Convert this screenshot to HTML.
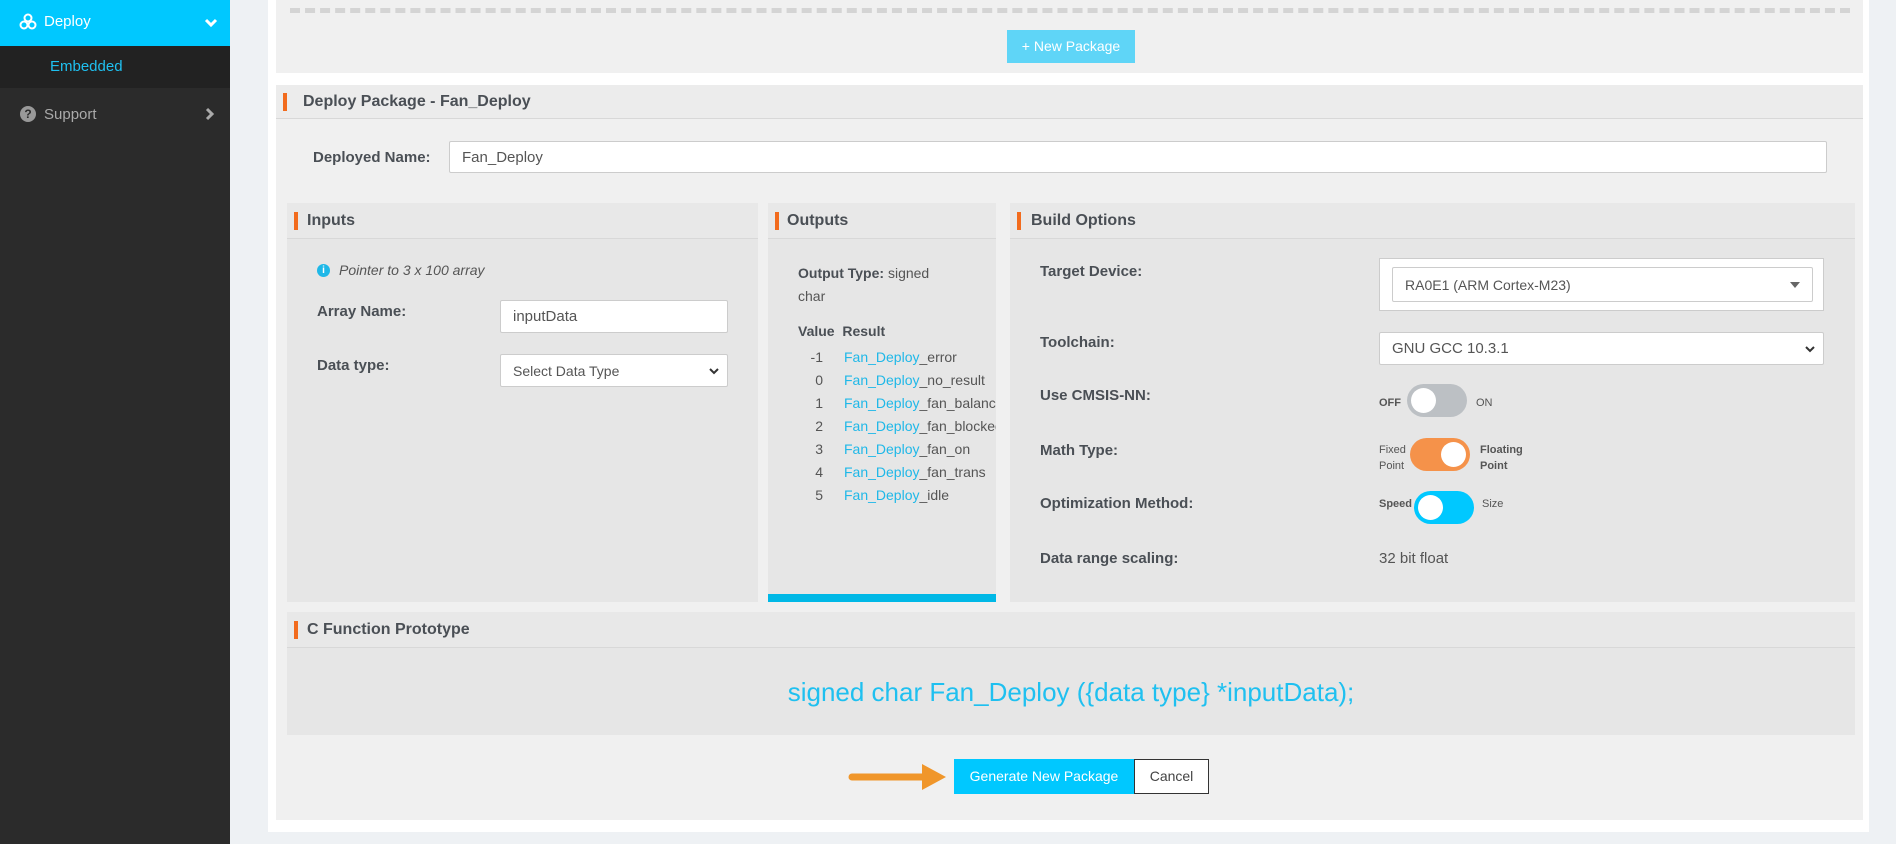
<!DOCTYPE html>
<html><head><meta charset="utf-8"><style>
*{box-sizing:border-box;margin:0;padding:0}
body{width:1896px;height:844px;overflow:hidden;background:#eef1f4;font-family:"Liberation Sans",Arial,sans-serif;color:#444;font-size:15px;position:relative}
.abs{position:absolute}
.sb{left:0;top:0;width:230px;height:844px;background:#2b2b2b}
.b{font-weight:bold;color:#4a4f55}
.hdr{position:absolute;left:0;right:0;top:0;background:#e8e8e8;border-bottom:1px solid #d8d8d8;font-weight:bold;color:#4a4f55;font-size:16px}
.hdr:before{content:"";position:absolute;left:7px;width:4px;background:#f26b1d;top:50%;height:18px;margin-top:-9px}
.panel{position:absolute;background:#e6e6e6}
.inp{position:absolute;background:#fff;border:1px solid #ccc;border-radius:2px;font-size:15px;color:#555;padding-left:12px;display:flex;align-items:center}
.link{color:#1fb8e8}
.tg{position:absolute;width:60px;height:33px;border-radius:17px}
.tg i{position:absolute;top:4px;width:25px;height:25px;border-radius:50%;background:#fff}
.sm{position:absolute;font-size:11px;color:#555}
</style></head><body>
<div class="abs sb"></div>
<div class="abs" style="left:0;top:0;width:230px;height:46px;background:#00c8ff;color:#fff;font-size:15px">
<svg class="abs" style="left:19px;top:13px" width="18" height="18" viewBox="0 0 18 18"><circle cx="9" cy="5" r="3.5" fill="none" stroke="#fff" stroke-width="2"/><circle cx="5" cy="12" r="3.5" fill="none" stroke="#fff" stroke-width="2"/><circle cx="13" cy="12" r="3.5" fill="none" stroke="#fff" stroke-width="2"/></svg>
<span class="abs" style="left:44px;top:13px">Deploy</span>
<svg class="abs" style="left:204px;top:17px" width="14" height="12" viewBox="0 0 14 12"><path d="M2 3 L7 8 L12 3" stroke="#fff" stroke-width="3" fill="none"/></svg>
</div>
<div class="abs" style="left:0;top:46px;width:230px;height:42px;background:#222"><span class="abs" style="left:50px;top:12px;color:#1fc0f0">Embedded</span></div>
<div class="abs" style="left:20px;top:106px;width:16px;height:16px;border-radius:50%;background:#999;color:#2b2b2b;font-size:12px;font-weight:bold;text-align:center;line-height:16px">?</div>
<span class="abs" style="left:44px;top:106px;color:#aaa">Support</span>
<svg class="abs" style="left:204px;top:107px" width="12" height="14" viewBox="0 0 12 14"><path d="M3 2 L8 7 L3 12" stroke="#aaa" stroke-width="3" fill="none"/></svg>

<div class="abs" style="left:268px;top:0;width:1601px;height:832px;background:#fff"></div>
<div class="abs" style="left:276px;top:0;width:1587px;height:73px;background:#f0f0f0"></div>
<div class="abs" style="left:290px;top:8px;width:1560px;height:5px;border-top:5px dashed #d4d4d4"></div>
<div class="abs" style="left:1007px;top:30px;width:128px;height:33px;background:#5fd5f7;color:#fff;font-size:14px;text-align:center;line-height:33px">+ New Package</div>

<div class="abs" style="left:276px;top:85px;width:1587px;height:735px;background:#f0f0f0"></div>
<div class="hdr" style="left:276px;width:1587px;top:85px;height:34px;line-height:34px;padding-left:27px;background:#ececec">Deploy Package - Fan_Deploy</div>
<span class="abs b" style="left:313px;top:149px">Deployed Name:</span>
<div class="inp" style="left:449px;top:141px;width:1378px;height:32px">Fan_Deploy</div>

<div class="panel" style="left:287px;top:203px;width:471px;height:399px">
<div class="hdr" style="height:36px;line-height:36px;padding-left:20px">Inputs</div>
<div class="abs" style="left:30px;top:61px;width:13px;height:13px;border-radius:50%;background:#1fb8e8;color:#fff;font-size:10px;font-weight:bold;text-align:center;line-height:13px">i</div>
<span class="abs" style="left:52px;top:59px;font-style:italic;font-size:14px;color:#555">Pointer to 3 x 100 array</span>
<span class="abs b" style="left:30px;top:100px">Array Name:</span>
<div class="inp" style="left:213px;top:97px;width:228px;height:33px">inputData</div>
<span class="abs b" style="left:30px;top:154px">Data type:</span>
<div class="inp" style="left:213px;top:151px;width:228px;height:33px;font-size:14px">Select Data Type<svg class="abs" style="right:8px;top:12px" width="10" height="8" viewBox="0 0 10 8"><path d="M1 2 L5 6 L9 2" stroke="#333" stroke-width="2" fill="none"/></svg></div>
</div>

<div class="panel" style="left:768px;top:203px;width:228px;height:399px;overflow:hidden">
<div class="hdr" style="height:36px;line-height:36px;padding-left:19px">Outputs</div>
<div class="abs" style="left:30px;top:59px;line-height:23px;color:#555;font-size:14px"><b style="color:#4a4f55">Output Type:</b> signed<br>char</div>
<div class="abs b" style="left:30px;top:120px;font-size:14px">Value&nbsp; Result</div>
<div class="abs" style="left:30px;top:143px;line-height:23px;color:#555;white-space:nowrap;font-size:14px">
<div><span style="display:inline-block;width:25px;text-align:right;margin-right:21px">-1</span><span class="link">Fan_Deploy</span>_error</div>
<div><span style="display:inline-block;width:25px;text-align:right;margin-right:21px">0</span><span class="link">Fan_Deploy</span>_no_result</div>
<div><span style="display:inline-block;width:25px;text-align:right;margin-right:21px">1</span><span class="link">Fan_Deploy</span>_fan_balanced</div>
<div><span style="display:inline-block;width:25px;text-align:right;margin-right:21px">2</span><span class="link">Fan_Deploy</span>_fan_blocked</div>
<div><span style="display:inline-block;width:25px;text-align:right;margin-right:21px">3</span><span class="link">Fan_Deploy</span>_fan_on</div>
<div><span style="display:inline-block;width:25px;text-align:right;margin-right:21px">4</span><span class="link">Fan_Deploy</span>_fan_trans</div>
<div><span style="display:inline-block;width:25px;text-align:right;margin-right:21px">5</span><span class="link">Fan_Deploy</span>_idle</div>
</div>
<div class="abs" style="left:0;top:391px;width:228px;height:8px;background:#00b8e6"></div>
</div>

<div class="panel" style="left:1010px;top:203px;width:845px;height:399px">
<div class="hdr" style="height:36px;line-height:36px;padding-left:21px">Build Options</div>
<span class="abs b" style="left:30px;top:60px">Target Device:</span>
<div class="abs" style="left:369px;top:55px;width:445px;height:53px;background:#fff;border:1px solid #ccc"></div>
<div class="inp" style="left:382px;top:64px;width:421px;height:35px;font-size:14px">RA0E1 (ARM Cortex-M23)<svg class="abs" style="right:12px;top:14px" width="10" height="6"><path d="M0 0 L10 0 L5 6Z" fill="#666"/></svg></div>
<span class="abs b" style="left:30px;top:131px">Toolchain:</span>
<div class="inp" style="left:369px;top:129px;width:445px;height:33px">GNU GCC 10.3.1<svg class="abs" style="right:8px;top:12px" width="10" height="8" viewBox="0 0 10 8"><path d="M1 2 L5 6 L9 2" stroke="#333" stroke-width="2" fill="none"/></svg></div>
<span class="abs b" style="left:30px;top:184px">Use CMSIS-NN:</span>
<span class="sm" style="left:369px;top:194px;font-weight:bold">OFF</span>
<div class="tg" style="left:397px;top:181px;background:#bcc0c4"><i style="left:4px"></i></div>
<span class="sm" style="left:466px;top:194px">ON</span>
<span class="abs b" style="left:30px;top:239px">Math Type:</span>
<span class="sm" style="left:369px;top:239px;line-height:16px">Fixed<br>Point</span>
<div class="tg" style="left:400px;top:235px;background:#f5924a"><i style="left:31px"></i></div>
<span class="sm" style="left:470px;top:239px;line-height:16px;font-weight:bold">Floating<br>Point</span>
<span class="abs b" style="left:30px;top:292px">Optimization Method:</span>
<span class="sm" style="left:369px;top:295px;font-weight:bold">Speed</span>
<div class="tg" style="left:404px;top:288px;background:#00c8ff"><i style="left:4px"></i></div>
<span class="sm" style="left:472px;top:295px">Size</span>
<span class="abs b" style="left:30px;top:347px">Data range scaling:</span>
<span class="abs" style="left:369px;top:347px;color:#555">32 bit float</span>
</div>

<div class="panel" style="left:287px;top:612px;width:1568px;height:123px">
<div class="hdr" style="height:36px;line-height:36px;padding-left:20px">C Function Prototype</div>
<div class="abs" style="left:0;right:0;top:65px;text-align:center;font-size:26px;color:#1fc0f0">signed char Fan_Deploy ({data type} *inputData);</div>
</div>

<svg class="abs" style="left:848px;top:760px" width="104" height="32" viewBox="0 0 104 32"><path d="M4 17 H78" stroke="#f0962a" stroke-width="7" stroke-linecap="round"/><path d="M74 4 L98 17 L74 30Z" fill="#f0962a"/></svg>
<div class="abs" style="left:954px;top:759px;width:180px;height:35px;background:#00c8ff;color:#fff;font-size:14px;text-align:center;line-height:35px">Generate New Package</div>
<div class="abs" style="left:1134px;top:759px;width:75px;height:35px;background:#fff;border:1px solid #333;color:#444;font-size:14px;text-align:center;line-height:33px">Cancel</div>
</body></html>
